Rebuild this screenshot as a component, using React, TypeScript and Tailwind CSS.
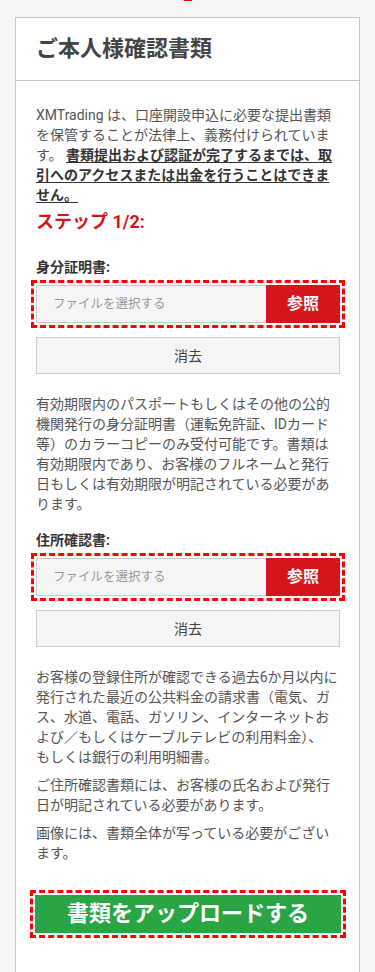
export default function App() {
  return (
    <div className="min-h-screen bg-[#f5f5f5] font-['Roboto','Noto_Sans_CJK_JP',sans-serif]">
      {/* top marker */}
      <div className="flex justify-center">
        <div className="h-px w-2 bg-[#ff0000]" />
      </div>

      <div className="mx-[15px] mt-4 border border-[#c8c8c8] bg-white">
        {/* header */}
        <div className="border-b border-[#c8c8c8] px-5 py-4">
          <h1 className="text-[22px] font-bold leading-[30px] text-[#444]">ご本人様確認書類</h1>
        </div>

        {/* body */}
        <div className="pl-5 pr-[19px] pt-6 pb-12 text-[14px] leading-5 text-[#555]">
          <p>
            XMTrading は、口座開設申込に必要な提出書類を保管することが法律上、義務付けられています。{" "}
            <span className="font-bold text-[#333] underline underline-offset-2">
              書類提出および認証が完了するまでは、取引へのアクセスまたは出金を行うことはできません。{" "}
            </span>
          </p>

          <h2 className="mt-1.5 text-[18px] font-bold leading-[22px] text-[#d6141c]">ステップ 1/2:</h2>

          <FileField label="身分証明書:" />

          <p className="mt-5">
            有効期限内のパスポートもしくはその他の公的機関発行の身分証明書（運転免許証、IDカード等）のカラーコピーのみ受付可能です。書類は有効期限内であり、お客様のフルネームと発行日もしくは有効期限が明記されている必要があります。
          </p>

          <FileField label="住所確認書:" first={false} />

          <p className="mt-5">
            お客様の登録住所が確認できる過去6か月以内に発行された最近の公共料金の請求書（電気、ガス、水道、電話、ガソリン、インターネットおよび／もしくはケーブルテレビの利用料金）、
            <br />
            もしくは銀行の利用明細書。
          </p>
          <p className="mt-2">ご住所確認書類には、お客様の氏名および発行日が明記されている必要があります。</p>
          <p className="mt-2">画像には、書類全体が写っている必要がございます。</p>

          {/* upload */}
          <div className="-mx-[6px] mt-[27px] border-[3px] border-dashed border-[#ff0000] p-[2px]">
            <button
              type="button"
              className="flex h-[38px] w-full items-center justify-center bg-[#2aa545] text-[22px] font-bold text-white"
            >
              書類をアップロードする
            </button>
          </div>
        </div>
      </div>
    </div>
  );
}

function FileField({ label, first = true }: { label: string; first?: boolean }) {
  return (
    <div className={first ? "mt-6" : "mt-4"}>
      <p className="font-bold text-[#333]">{label}</p>
      <div className="-mx-[5px] mt-[3px] border-[3px] border-dashed border-[#ff0000] p-[2px]">
        <div className="flex h-[38px]">
          <div className="flex flex-1 items-center border border-r-0 border-[#ccc] bg-[#f5f5f5] pl-4 text-[12.5px] text-[#999]">
            ファイルを選択する
          </div>
          <button type="button" className="w-[74px] bg-[#d6141c] text-[16px] font-bold text-white">
            参照
          </button>
        </div>
      </div>
      <button
        type="button"
        className="mt-[9px] flex h-[37px] w-full items-center justify-center border border-[#ccc] bg-[#f5f5f5] text-[14px] text-[#444]"
      >
        消去
      </button>
    </div>
  );
}
